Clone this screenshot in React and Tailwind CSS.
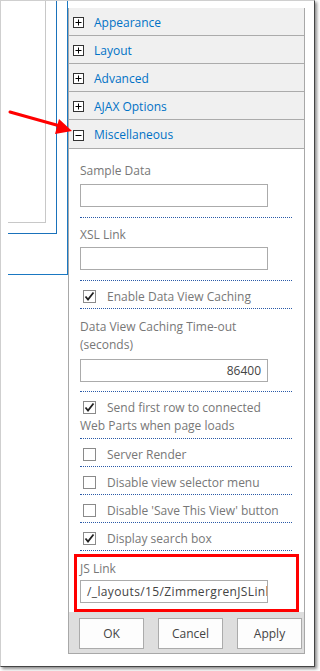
import React from "react";

const headers = ["Appearance", "Layout", "Advanced", "AJAX Options"];

function ExpandBox({ open }) {
  return (
    <svg width="11" height="11" viewBox="0 0 11 11" className="shrink-0">
      <rect x="0.5" y="0.5" width="10" height="10" fill="#fff" stroke="#333" />
      <line x1="2.5" y1="5.5" x2="8.5" y2="5.5" stroke="#000" />
      {!open && <line x1="5.5" y1="2.5" x2="5.5" y2="8.5" stroke="#000" />}
    </svg>
  );
}

function Check({ checked }) {
  return (
    <svg width="13" height="13" viewBox="0 0 13 13" className="inline-block align-[-2px] mr-[11px] ml-[3px]">
      <rect x="0.5" y="0.5" width="12" height="12" fill="#fff" stroke="#8a8a8a" />
      {checked && (
        <path d="M2.5 6.5 L5 9.5 L10.5 2.5" fill="none" stroke="#222" strokeWidth="1.8" />
      )}
    </svg>
  );
}

function TextBox({ value, right, wide }) {
  return (
    <div
      className={`h-[23px] w-[188px] border border-[#ababab] bg-white text-[#444] overflow-hidden whitespace-nowrap leading-[21px] ${
        right ? "text-right pr-[6px]" : "pl-[6px]"
      } ${wide ? "tracking-[0.37px]" : ""}`}
    >
      {value}
    </div>
  );
}

function CheckRow({ label, checked }) {
  return (
    <div className="pt-[7px] pb-[2px] border-b border-dotted border-[#2a5aa8]">
      <Check checked={checked} />
      {label}
    </div>
  );
}

export default function App() {
  return (
    <div className="relative w-[320px] h-[671px] bg-white font-['Open_Sans',sans-serif] text-[12px] leading-[18px]">
      <div className="w-[315px] h-[667px] flex items-start border-l border-t border-[#cfcfcf] border-r border-b border-r-[#444] border-b-[#444] shadow-[2px_2px_3px_rgba(0,0,0,0.45)] bg-white">
        {/* page behind the tool pane */}
        <div className="ml-[7px] w-[60px] h-[274px] border-r border-b border-[#1a78c2]">
          <div className="w-[49px] h-[233px] border-r border-b border-[#1a72bb]">
            <div className="w-[38px] h-[222px] border-r border-b border-[#c8c8c8]" />
          </div>
        </div>

        {/* tool pane */}
        <div className="mt-[7px] w-[237px] border-l border-r border-b border-[#a8a8a8] bg-white text-[#777]">
          {headers.map((h) => (
            <div key={h} className="h-[28px] flex items-center pl-[4px] pt-[2px] bg-[#f0f0f0] border-b border-[#ababab]">
              <ExpandBox />
              <span className="ml-[10px] text-[#0072c6]">{h}</span>
            </div>
          ))}
          <div className="h-[29px] flex items-center pl-[4px] pt-[2px] bg-[#f0f0f0] border-b border-[#ababab]">
            <ExpandBox open />
            <span className="ml-[10px] text-[#0072c6]">Miscellaneous</span>
          </div>

          <div className="pl-[11px] pr-[12px]">
            <div className="pt-[13px] pb-[10px] border-b border-dotted border-[#2a5aa8]">
              <div>Sample Data</div>
              <div className="mt-[4px]">
                <TextBox />
              </div>
            </div>
            <div className="pt-[8px] pb-[10px] border-b border-dotted border-[#2a5aa8]">
              <div>XSL Link</div>
              <div className="mt-[3px]">
                <TextBox />
              </div>
            </div>
            <CheckRow label="Enable Data View Caching" checked />
            <div className="pt-[9px] pb-[9px] border-b border-dotted border-[#2a5aa8]">
              <div>
                Data View Caching Time-out
                <br />
                (seconds)
              </div>
              <div className="mt-[5px]">
                <TextBox value="86400" right />
              </div>
            </div>
            <div className="pt-[7px] pb-[3px] border-b border-dotted border-[#2a5aa8]">
              <Check checked />
              Send first row to connected
              <br />
              Web Parts when page loads
            </div>
            <CheckRow label="Server Render" />
            <CheckRow label="Disable view selector menu" />
            <CheckRow label="Disable 'Save This View' button" />
            <CheckRow label="Display search box" checked />

            <div className="mt-[3px] -ml-[6px] -mr-[7px] border-[3px] border-[#ff0000] pl-[3px] pt-[3px] pb-[6px]">
              <div>JS Link</div>
              <div className="mt-[2px]">
                <TextBox value="/_layouts/15/ZimmergrenJSLink" wide />
              </div>
            </div>
          </div>

          <div className="h-[41px] bg-[#dedede] pl-[10px] pt-[6px] flex gap-[14px] text-[#444]">
            {["OK", "Cancel", "Apply"].map((b) => (
              <div
                key={b}
                className="w-[65px] h-[31px] border border-[#ababab] bg-[#fdfdfd] flex items-center justify-center"
              >
                {b}
              </div>
            ))}
          </div>
        </div>
      </div>

      {/* annotation arrow */}
      <svg className="absolute left-0 top-[100px]" width="80" height="40" viewBox="0 0 80 40">
        <line x1="10" y1="12" x2="60" y2="26" stroke="#f00" strokeWidth="3" strokeLinecap="round" />
        <polygon points="59,19 55,34 72,31" fill="#f00" />
      </svg>
    </div>
  );
}
